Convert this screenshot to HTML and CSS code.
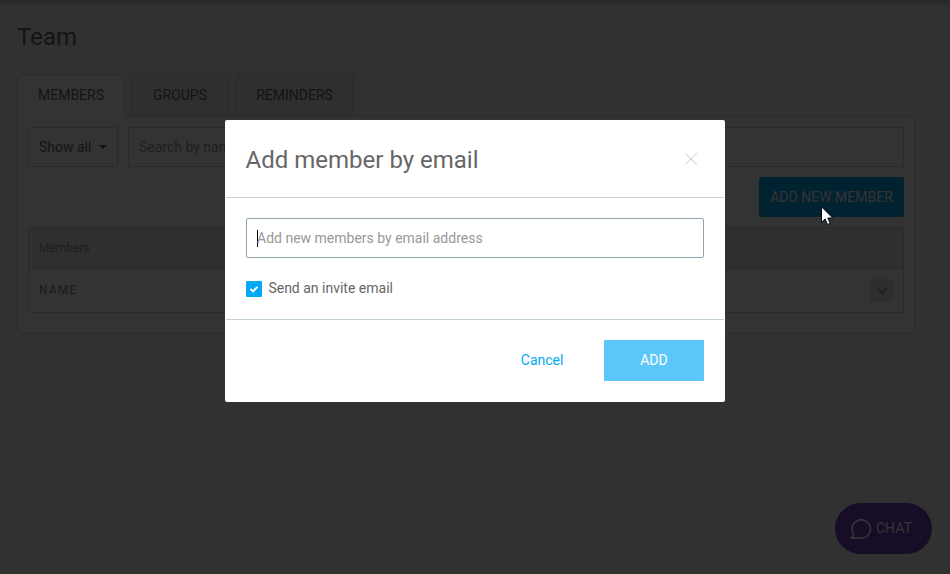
FILE: index.html
```html
<!DOCTYPE html>
<html lang="en">
<head>
<meta charset="utf-8">
<title>Team</title>
<link rel="stylesheet" href="styles.css">
</head>
<body>
<main class="page">
  <h1 class="page-title">Team</h1>
  <nav class="tabs">
    <a class="tab tab-members active">MEMBERS</a>
    <a class="tab tab-groups">GROUPS</a>
    <a class="tab tab-reminders">REMINDERS</a>
  </nav>
  <section class="panel">
    <div class="filters">
      <div class="select">Show all <span class="caret"></span></div>
      <div class="search">Search by name</div>
    </div>
    <div class="actions"><div class="add-member">ADD NEW MEMBER</div></div>
    <div class="table">
      <div class="table-head">Members</div>
      <div class="table-row">
        <span class="column-name">NAME</span>
        <span class="row-menu"><svg width="12" height="8" viewBox="0 0 12 8"><path d="M1.3 1.3 6 6 10.7 1.3" fill="none" stroke="#78858d" stroke-width="1.4"/></svg></span>
      </div>
    </div>
  </section>
</main>
<div class="chat">
  <svg width="22" height="22" viewBox="0 0 22 22"><path d="M1.3 20.2H11.3A9.2 9.2 0 1 0 3.8 16.4C3.7 17.9 2.7 19.2 1.3 20.2Z" fill="none" stroke="#fff" stroke-width="1.8" stroke-linejoin="round"/></svg>
  <span class="chat-label">CHAT</span>
</div>
<div class="overlay">
  <div class="modal">
    <header class="modal-header">
      <h2>Add member by email</h2>
      <svg class="close" width="14" height="14" viewBox="0 0 14 14"><path d="M1.2 1.2 12.8 12.8M12.8 1.2 1.2 12.8" fill="none" stroke="#bfcdd4" stroke-width="1"/></svg>
    </header>
    <div class="modal-body">
      <div class="email"><span class="text-cursor"></span>Add new members by email address</div>
      <div class="invite">
        <span class="checkbox"><svg width="16" height="16" viewBox="0 0 16 16"><path d="M4.5 8.1 7 10.4 11.5 5.9" fill="none" stroke="#fff" stroke-width="2"/></svg></span>
        <span>Send an invite email</span>
      </div>
    </div>
    <footer class="modal-footer">
      <span class="cancel">Cancel</span>
      <span class="submit">ADD</span>
    </footer>
  </div>
</div>
<svg class="pointer" width="13" height="20" viewBox="0 0 13 20"><path d="M.5.8V16.5L4.1 13 6.6 18.5 9.2 17.4 6.8 12H11.7Z" fill="#fff" stroke="#050914" stroke-width="1"/></svg>
</body>
</html>
```
FILE: styles.css
```css
* { box-sizing: border-box; }
body {
  margin: 0;
  height: 574px;
  overflow: hidden;
  background: #f2f4f7;
  color: #666;
  font: 14px/20px Roboto, sans-serif;
}
.page {
  height: 574px;
  padding: 21px 35px 0 17px;
  box-shadow: inset 0 6px 7px -4px rgba(0, 0, 0, .28);
}
.page-title {
  margin: 0 0 21px;
  font-size: 24px;
  line-height: 32px;
  font-weight: 400;
}
.tabs { display: flex; gap: 5px; height: 43px; }
.tab {
  height: 43px;
  padding-top: 10px;
  border: 1px solid #d2d6d9;
  border-radius: 2px 2px 0 0;
  background: #e6e9ee;
  text-align: center;
  z-index: 1;
}
.tab-members { width: 108px; }
.tab-groups { width: 100px; }
.tab-reminders { width: 119px; }
.tab.active { background: #fff; border-bottom-color: #fff; }
.panel {
  width: 898px;
  height: 218px;
  margin-top: -1px;
  padding: 10px;
  border: 1px solid #d2d6d9;
  border-radius: 0 2px 2px;
  background: #fff;
}
.filters { display: flex; gap: 10px; }
.select, .search {
  height: 40px;
  padding: 9px 10px;
  border: 1px solid #ccd0d2;
  border-radius: 2px;
}
.select { display: flex; align-items: center; gap: 8px; width: 90px; white-space: nowrap; }
.search { flex: 1; color: #999; }
.caret { border: 4px solid transparent; border-top-color: #666; border-bottom: 0; }
.actions { display: flex; justify-content: flex-end; margin: 10px 0; }
.add-member {
  width: 145px;
  height: 40px;
  border-radius: 2px;
  background: #03a9f4;
  color: #fff;
  line-height: 40px;
  text-align: center;
}
.table { border: 1px solid #ccd0d2; border-radius: 2px; height: 86px; }
.table-head {
  height: 41px;
  padding-left: 10px;
  border-bottom: 1px solid #ccd0d2;
  background: #e5e8ee;
  color: #999;
  font-size: 12px;
  line-height: 40px;
}
.table-row {
  display: flex;
  align-items: center;
  justify-content: space-between;
  height: 43px;
  padding: 0 10px;
  color: #888;
  font-size: 12px;
  letter-spacing: 1.1px;
}
.column-name { padding-bottom: 2px; }
.row-menu {
  display: flex;
  align-items: center;
  justify-content: center;
  width: 23px;
  height: 23px;
  border-radius: 2px;
  background: #dbe6ee;
}
.chat {
  position: fixed;
  right: 18px;
  bottom: 20px;
  display: flex;
  align-items: center;
  gap: 4px;
  width: 97px;
  height: 51px;
  padding-left: 15px;
  border-radius: 26px;
  background: #7341be;
  color: #fff;
}
.chat-label { padding-bottom: 2px; }
.overlay {
  position: fixed;
  inset: 0;
  z-index: 10;
  padding-top: 120px;
  background: rgba(0, 0, 0, .8);
}
.modal {
  width: 500px;
  height: 282px;
  margin: 0 auto;
  padding: 0 1px;
  border-radius: 2px;
  background: #fff;
}
.modal-header {
  display: flex;
  align-items: center;
  justify-content: space-between;
  height: 78px;
  padding: 0 26px 0 19.6px;
  border-bottom: 1px solid #c6d2d9;
}
.modal-header h2 { margin: 2px 0 0; font-size: 24px; line-height: 32px; font-weight: 400; }
.modal-body { height: 122px; padding: 20px; border-bottom: 1px solid #c6d2d9; }
.email {
  display: flex;
  align-items: center;
  height: 40px;
  padding-left: 10px;
  border: 1px solid #90a4ae;
  border-radius: 2px;
  color: #999;
}
.text-cursor { width: 1px; height: 17px; margin-right: -1px; background: #000; }
.invite { display: flex; gap: 6.4px; margin-top: 20px; }
.checkbox { width: 16px; height: 16px; margin-top: 3px; border-radius: 1px; background: #03a9f4; }
.checkbox svg { display: block; }
.modal-footer {
  display: flex;
  justify-content: flex-end;
  align-items: center;
  gap: 40.6px;
  height: 81px;
  padding: 0 20px;
}
.cancel { padding-bottom: 2px; color: #03a9f4; }
.submit {
  width: 100px;
  height: 41px;
  border-radius: 1px;
  background: #5bc6f8;
  color: #fff;
  line-height: 41px;
  text-align: center;
}
.pointer { position: fixed; left: 821px; top: 206px; z-index: 20; }
```
